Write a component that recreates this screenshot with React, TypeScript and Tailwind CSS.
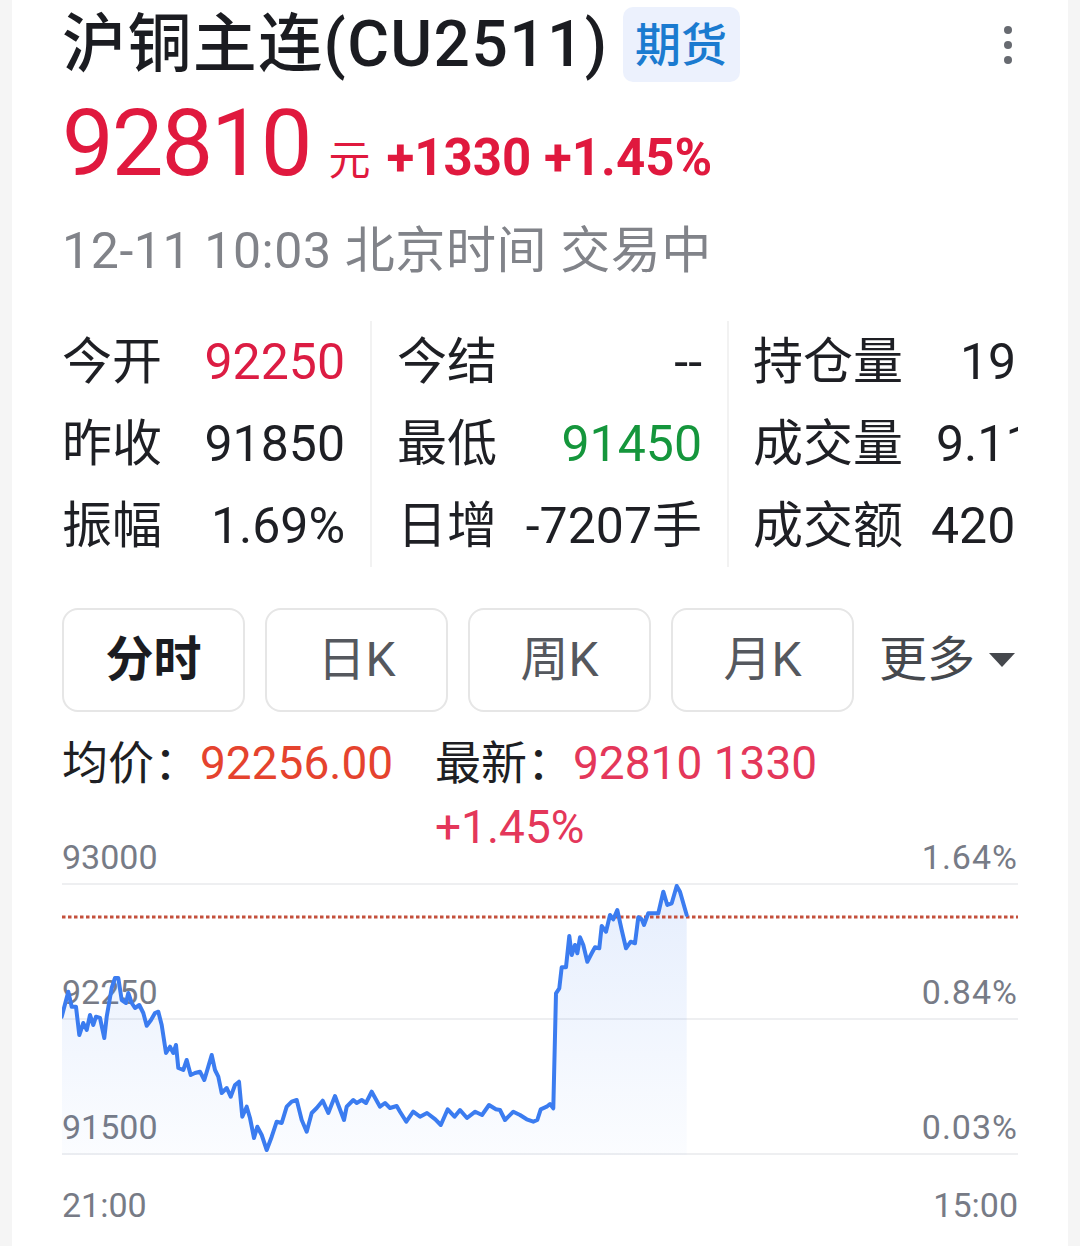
import React from 'react';

const FONT = "font-['Roboto','Noto_Sans_CJK_SC',sans-serif]";

// price trace, in page pixels (x 62..687, y 884 = 93000 .. 1154 = 91500)
const POINTS: [number, number][] = [
  [61.7, 1016.7], [68.3, 991.7], [71.7, 1006.7], [76, 1006.7], [79.3, 1035], [83.3, 1023], [86.7, 1030], [90, 1015],
  [93.3, 1025], [96, 1016.7], [100, 1018], [104.3, 1038], [106.7, 1016.7], [111.7, 988], [115, 978], [118.3, 978],
  [121.7, 1000], [126, 1003], [128.3, 993], [131.7, 1003], [135, 1008], [139.3, 1005], [143.3, 1013], [146.7, 1025.7],
  [151, 1020], [155, 1013], [158.3, 1011.7], [161.7, 1025], [166, 1053], [170, 1046.7], [173.3, 1053], [176, 1045],
  [178.3, 1068], [183.3, 1070], [186.7, 1060], [190.7, 1075], [195, 1073], [200, 1071.7], [204.3, 1080], [208.3, 1066.7],
  [211.7, 1055], [215, 1070], [218.3, 1076.7], [221.7, 1093], [226.7, 1088], [230.7, 1096.7], [235, 1085], [239, 1081.7],
  [242.3, 1116.7], [246.7, 1106.7], [250, 1118], [254, 1138], [257.3, 1126.7], [261.7, 1135], [266.7, 1150], [271.7, 1136.7],
  [276.7, 1121.7], [281.7, 1123], [286.7, 1106.7], [291.7, 1101.7], [296.7, 1100], [301.7, 1120], [306.7, 1131.7], [311.7, 1113],
  [316.7, 1108], [322.7, 1100.7], [328.3, 1113], [335, 1096], [338.3, 1105], [344, 1120], [346.7, 1106.7], [353.3, 1100],
  [356.7, 1103], [361.7, 1100], [366, 1103], [371.7, 1091.7], [380, 1106.7], [385, 1103], [390, 1108], [396.7, 1106],
  [400, 1111.7], [406.3, 1121.7], [413.2, 1111.7], [420, 1116.7], [427, 1113], [435.3, 1119.3], [440.8, 1125], [447.7, 1109.3],
  [454.5, 1116.7], [460, 1110], [467, 1118], [475.2, 1111.7], [482, 1115], [489, 1105], [495.9, 1109.3], [500, 1110],
  [505, 1120], [513.3, 1111.7], [520, 1115], [526.7, 1119.3], [533.3, 1121.7], [537.3, 1120], [540.7, 1109.3], [546.7, 1106.7],
  [550, 1104], [553.3, 1108.3], [556, 993.3], [559.3, 988.3], [561.7, 967.3], [566, 967.3], [569.3, 936], [571.7, 955],
  [575, 945], [577.3, 953.3], [580, 937.3], [583.3, 945], [587.3, 961.7], [591.7, 953.3], [595, 947.3], [599.3, 948.3],
  [601.7, 926], [606, 931.7], [610, 915], [613.3, 919.3], [617.3, 910], [621.7, 930], [626, 948.3], [630.7, 941.7],
  [635, 943.3], [638.3, 917.3], [641.7, 919.3], [644, 925], [648.3, 913.3], [658.3, 913.3], [663.3, 891.7], [667.3, 905],
  [671.7, 903.3], [676.7, 886], [680, 891.7], [686.7, 915],
];

const line = POINTS.map(([x, y], i) => `${i === 0 ? 'M' : 'L'}${x} ${y}`).join(' ');
const area = `${line} L686.7 1155 L61.7 1155 Z`;

function Stat({ label, value, color = 'text-[#1e1f24]' }: { label: string; value: string; color?: string }) {
  return (
    <div className="flex justify-between whitespace-nowrap">
      <span>{label}</span>
      <span className={color}>{value}</span>
    </div>
  );
}

export default function App() {
  return (
    <div className={`min-h-screen bg-[#f5f5f5] ${FONT}`}>
      <div className="mx-[12px] min-h-screen bg-white px-[50px] text-[#1e1f24]">
        {/* Title */}
        <div className="flex items-center justify-between pt-[7px]">
          <div className="flex items-center gap-[14px]">
            <h1 className="text-[64px] font-medium leading-none tracking-[1.4px] text-[#1b1c21]">沪铜主连(CU2511)</h1>
            <span className="flex h-[75px] w-[117px] items-center justify-center rounded-[10px] bg-[#ecf1fd] text-[46px] font-medium leading-none text-[#1b7bd0]">
              期货
            </span>
          </div>
          <div className="mr-[6px] flex flex-col gap-[7px]">
            <span className="h-[8px] w-[8px] rounded-full bg-[#676a70]" />
            <span className="h-[8px] w-[8px] rounded-full bg-[#676a70]" />
            <span className="h-[8px] w-[8px] rounded-full bg-[#676a70]" />
          </div>
        </div>

        {/* Price */}
        <div className="mt-[16px] flex items-baseline leading-none text-[#e0193e]">
          <span className="text-[92px] tracking-[-2px]">92810</span>
          <span className="ml-[18px] text-[42px]">元</span>
          <span className="ml-[16px] text-[51px] font-bold">+1330 +1.45%</span>
        </div>

        <p className="mt-[36px] text-[50px] leading-none tracking-[0.6px] text-[#818389]">12-11 10:03 北京时间 交易中</p>

        {/* Stats */}
        <div className="mt-[45px] flex text-[50px] leading-[82px]">
          <div className="w-[310px] shrink-0 border-r-2 border-[#f2f2f2] pr-[25px]">
            <Stat label="今开" value="92250" color="text-[#dc1c43]" />
            <Stat label="昨收" value="91850" />
            <Stat label="振幅" value="1.69%" />
          </div>
          <div className="w-[357px] shrink-0 border-r-2 border-[#f2f2f2] px-[25px]">
            <Stat label="今结" value="--" />
            <Stat label="最低" value="91450" color="text-[#15963c]" />
            <Stat label="日增" value="-7207手" />
          </div>
          <div className="min-w-0 flex-1 overflow-hidden pl-[24px]">
            <div className="flex whitespace-nowrap">
              <span className="w-[150px] shrink-0">持仓量</span>
              <span className="ml-[57px]">19</span>
            </div>
            <div className="flex whitespace-nowrap">
              <span className="w-[150px] shrink-0">成交量</span>
              <span className="ml-[33px]">9.11万</span>
            </div>
            <div className="flex whitespace-nowrap">
              <span className="w-[150px] shrink-0">成交额</span>
              <span className="ml-[28px]">420</span>
            </div>
          </div>
        </div>

        {/* Period tabs */}
        <div className="mt-[41px] flex items-center">
          <div className="flex gap-[20px]">
            {['分时', '日K', '周K', '月K'].map((t, i) => (
              <button
                key={t}
                className={`flex h-[104px] w-[183px] items-center justify-center rounded-[16px] border-2 border-[#e6e6e6] text-[48px] leading-none ${
                  i === 0 ? 'font-bold text-[#1b1c21]' : 'text-[#55585e]'
                }`}
              >
                {t}
              </button>
            ))}
          </div>
          <div className="flex flex-1 items-center justify-end gap-[13px] pr-[2px] text-[48px] leading-none text-[#45484d]">
            <span>更多</span>
            <svg width="28" height="16" viewBox="0 0 28 16">
              <polygon points="1,1 27,1 14,15" fill="#45484d" />
            </svg>
          </div>
        </div>

        {/* Average / latest */}
        <div className="mt-[19px] flex text-[46px] leading-[64px]">
          <p className="w-[373px] shrink-0 whitespace-nowrap">
            均价：<span className="text-[#e5432e]">92256.00</span>
          </p>
          <p className="w-[420px]">
            最新：<span className="text-[#e4375a]">92810 1330 +1.45%</span>
          </p>
        </div>

        {/* Chart */}
        <div className="relative -mt-[19px] text-[34px] leading-none text-[#777b86]">
          <div className="flex justify-between border-b-2 border-[#eeeff1] pb-[9px]">
            <span>93000</span>
            <span className="tracking-[1px]">1.64%</span>
          </div>
          <div className="flex h-[135px] items-end justify-between border-b-2 border-[#eeeff1] pb-[9px]">
            <span>92250</span>
            <span className="tracking-[1px]">0.84%</span>
          </div>
          <div className="flex h-[135px] items-end justify-between border-b-2 border-[#eeeff1] pb-[9px]">
            <span>91500</span>
            <span className="tracking-[1px]">0.03%</span>
          </div>

          <svg className="absolute left-0 top-0" width="956" height="315" viewBox="62 840 956 315">
            <defs>
              <linearGradient id="fill" x1="0" y1="0" x2="0" y2="1">
                <stop offset="0%" stopColor="#3b7cf0" stopOpacity="0.13" />
                <stop offset="100%" stopColor="#3b7cf0" stopOpacity="0.02" />
              </linearGradient>
            </defs>
            <path d={area} fill="url(#fill)" />
            <line x1="62" x2="1018" y1="917" y2="917" stroke="#c4503c" strokeWidth="3" strokeDasharray="3.5 2.5" />
            <path d={line} fill="none" stroke="#3b7cf0" strokeWidth="4" strokeLinejoin="round" strokeLinecap="round" />
          </svg>

          <div className="mt-[33px] flex justify-between">
            <span>21:00</span>
            <span>15:00</span>
          </div>
        </div>
      </div>
    </div>
  );
}
